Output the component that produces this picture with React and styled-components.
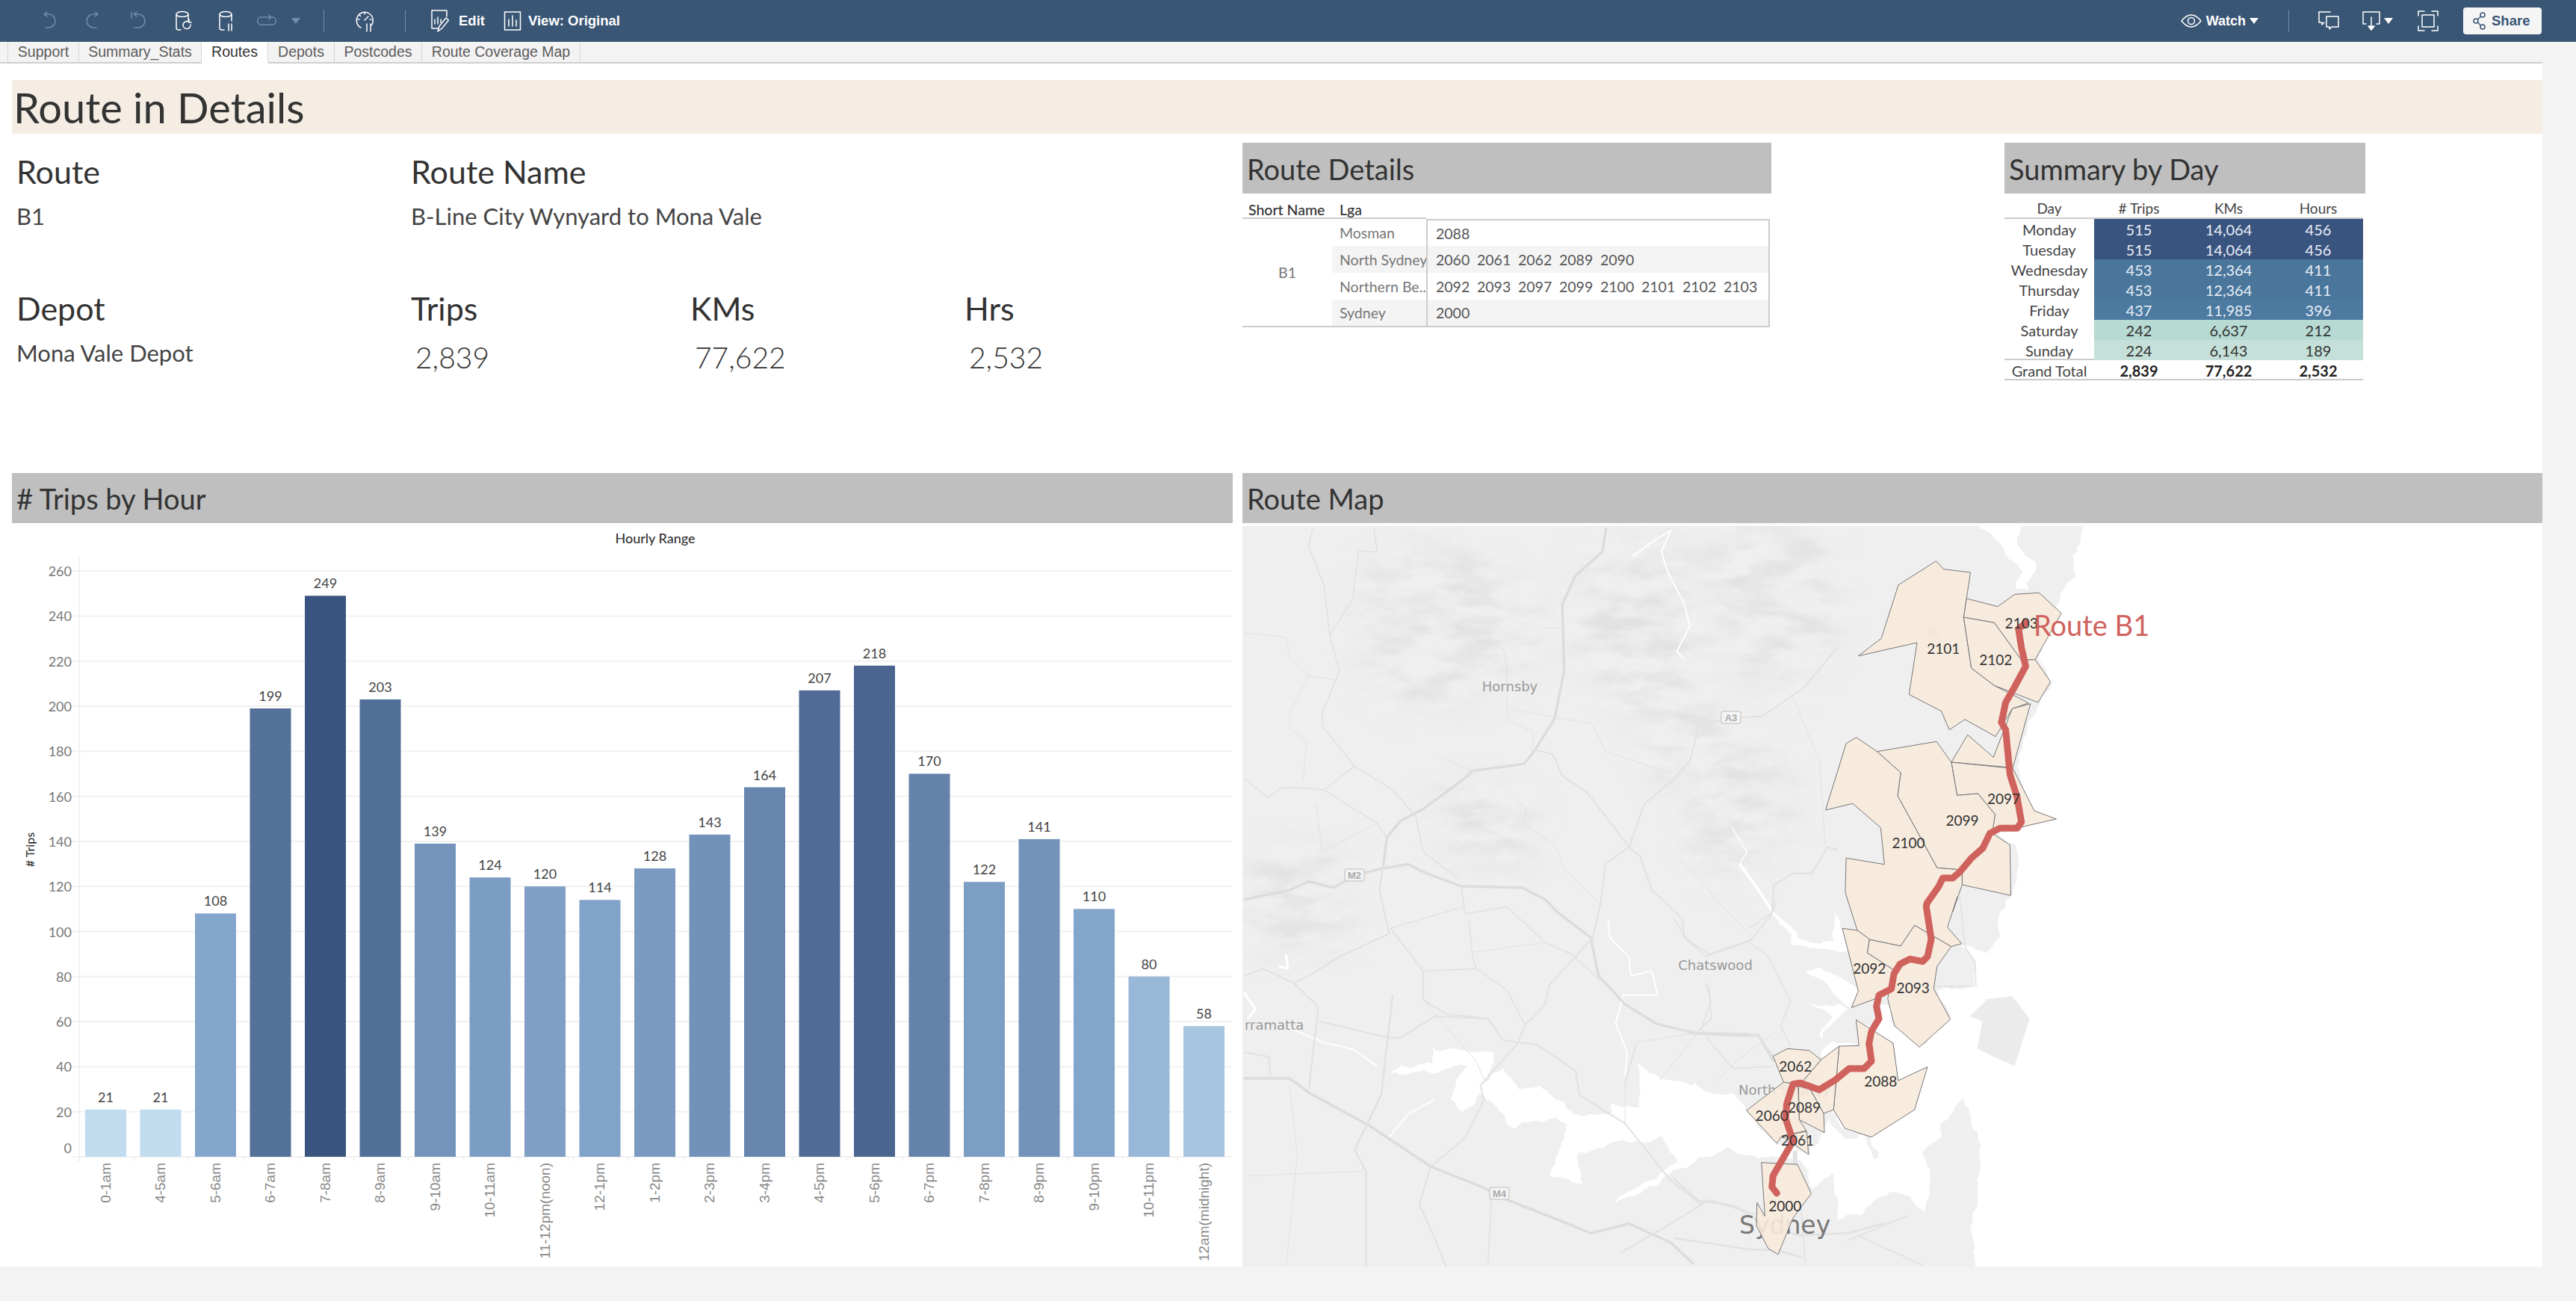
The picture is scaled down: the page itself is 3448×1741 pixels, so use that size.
import React from "react";
import styled, { createGlobalStyle } from "styled-components";

const FONT = `Lato, "Noto Sans", sans-serif`;
const UI_FONT = `"Liberation Sans", Arial, sans-serif`;

const GlobalStyle = createGlobalStyle`
  html, body { margin: 0; padding: 0; background: #f3f3f3; }
  body { font-family: ${FONT}; color: #333; }
`;

const Page = styled.div`
  width: 3448px;
  height: 1741px;
  overflow: hidden;
  background: #f3f3f3;
`;

const Toolbar = styled.div`
  height: 56px;
  background: #3a5675;
  display: flex;
  align-items: center;
  justify-content: space-between;
  padding: 0 46px 0 37px;
  font-family: ${UI_FONT};
  color: #fff;
`;

const ToolGroup = styled.div`
  display: flex;
  align-items: center;
  height: 100%;
`;

const Slot = styled.div`
  width: ${(p) => p.$w}px;
  margin-left: ${(p) => p.$ml || 0}px;
  display: flex;
  justify-content: center;
  align-items: center;
`;

const Divider = styled.div`
  width: 1px;
  height: 30px;
  background: #6d8ba8;
`;

const ToolLabel = styled.span`
  font-size: ${(p) => p.$size || 18.5}px;
  font-weight: 700;
  margin-left: ${(p) => p.$gap || 0}px;
  margin-right: ${(p) => p.$after || 0}px;
  white-space: nowrap;
`;

const ShareButton = styled.div`
  width: 105px;
  height: 36px;
  margin-left: 1px;
  background: #f5f5f5;
  border-radius: 4px;
  display: flex;
  align-items: center;
  padding-left: 13px;
  gap: 7px;
  box-sizing: border-box;
  color: #3a5675;
  font-size: 18.5px;
  font-weight: 700;
`;

const TabBar = styled.div`
  height: 29px;
  box-sizing: border-box;
  padding-left: 10px;
  display: flex;
  border-bottom: 2px solid #cfcfcf;
  width: 3403px;
  font-family: ${UI_FONT};
`;

const Tab = styled.div`
  height: 29px;
  width: ${(p) => p.$w}px;
  box-sizing: border-box;
  display: flex;
  align-items: center;
  justify-content: center;
  font-size: 19.5px;
  color: ${(p) => (p.$active ? "#333" : "#5c5c5c")};
  background: ${(p) => (p.$active ? "#fff" : "#f3f3f3")};
  border-right: 1px solid #d6d6d6;
  border-left: ${(p) => (p.$first ? "1px solid #d6d6d6" : "none")};
  border-bottom: 2px solid ${(p) => (p.$active ? "#fff" : "#cfcfcf")};
`;

const Dashboard = styled.div`
  width: 3403px;
  height: 1610px;
  box-sizing: border-box;
  padding: 22px 0 0 16px;
  background: #fff;
`;

const TitleBand = styled.div`
  height: 72px;
  background: #f5ede4;
  font-size: 56px;
  line-height: 74px;
  padding-left: 2px;
  color: #333;
`;

const TopRow = styled.div`
  height: 454px;
  display: flex;
`;

const MetaGrid = styled.div`
  width: 1647px;
  box-sizing: border-box;
  padding: 32px 0 0 6px;
  display: grid;
  grid-template-columns: 528px 374px 367px 1fr;
  grid-template-rows: 38px 145px 38px 1fr;
`;

const MetaLabel = styled.div`
  font-size: 43px;
  line-height: 38px;
  color: #333;
  grid-column: ${(p) => p.$span || "auto"};
`;

const MetaValue = styled.div`
  font-size: 31px;
  line-height: 40px;
  margin-top: 20px;
  color: #444;
  grid-column: ${(p) => p.$span || "auto"};
`;

const MetaNumber = styled.div`
  font-size: 39px;
  font-weight: 300;
  line-height: 40px;
  margin: 26px 0 0 6px;
  color: #333;
`;

const SidePanel = styled.div`
  width: ${(p) => p.$w}px;
  margin-left: ${(p) => p.$gap || 0}px;
  padding-top: 12px;
`;

const Band = styled.div`
  height: ${(p) => p.$h || 68}px;
  background: #bfbfbf;
  font-size: 38px;
  line-height: ${(p) => (p.$h || 68) + 2}px;
  padding-left: 6px;
  color: #333;
`;

const DetailsHead = styled.div`
  display: flex;
  height: 34px;
  font-size: 19.5px;
  font-weight: 500;
  line-height: 44px;
  color: #333;
`;

const HeadCell = styled.div`
  width: ${(p) => p.$w}px;
  padding-left: ${(p) => p.$pad}px;
  box-sizing: border-box;
  border-bottom: ${(p) => (p.$line ? "2px solid #ccc" : "none")};
`;

const DetailsBody = styled.div`
  display: grid;
  grid-template-columns: 120px 126px 460px;
  grid-template-rows: 36px 36px 36px 37px;
  font-size: 19.5px;
  color: #777;
`;

const ShortName = styled.div`
  grid-row: 1 / span 4;
  display: flex;
  align-items: center;
  justify-content: center;
  border-bottom: 2px solid #ccc;
`;

const LgaCell = styled.div`
  display: flex;
  align-items: center;
  padding-left: 10px;
  white-space: nowrap;
  overflow: hidden;
  background: ${(p) => (p.$alt ? "#f4f4f4" : "#fff")};
  border-bottom: ${(p) => (p.$last ? "2px solid #ccc" : "none")};
`;

const CodesCell = styled.div`
  display: flex;
  align-items: center;
  padding-left: 11px;
  color: #555;
  background: ${(p) => (p.$alt ? "#f4f4f4" : "#fff")};
  border-left: 2px solid #ccc;
  border-right: 2px solid #ccc;
  border-top: ${(p) => (p.$first ? "2px solid #ccc" : "none")};
  border-bottom: ${(p) => (p.$last ? "2px solid #ccc" : "none")};
`;

const Code = styled.span`
  width: 55px;
  flex: none;
`;

const SummaryGrid = styled.div`
  display: grid;
  grid-template-columns: 120px 120px 120px 120px;
  grid-template-rows: 34px repeat(8, 27px);
  font-size: 20px;
  text-align: center;
`;

const SummaryHead = styled.div`
  line-height: 40px;
  font-size: 19px;
  color: #444;
  border-bottom: 2px solid #ccc;
`;

const DayCell = styled.div`
  line-height: 28px;
  color: #444;
  border-bottom: ${(p) => (p.$line ? "2px solid #ccc" : "none")};
  box-sizing: border-box;
`;

const NumCell = styled.div`
  line-height: 28px;
  background: ${(p) => p.$bg};
  color: ${(p) => p.$fg};
`;

const TotalCell = styled.div`
  line-height: 28px;
  font-weight: ${(p) => (p.$label ? 400 : 700)};
  color: ${(p) => (p.$label ? "#444" : "#222")};
  border-bottom: 2px solid #ccc;
  box-sizing: border-box;
`;

const BottomRow = styled.div`
  height: 1062px;
  display: flex;
  gap: 13px;
`;

const ChartPanel = styled.div`
  width: ${(p) => p.$w}px;
  display: flex;
  flex-direction: column;
`;

const Drawing = styled.svg`
  display: block;
  flex: none;
`;

const ChartText = styled.text`
  font-family: ${FONT};
`;

const BARS = [
  ["0-1am", 21], ["4-5am", 21], ["5-6am", 108], ["6-7am", 199], ["7-8am", 249], ["8-9am", 203],
  ["9-10am", 139], ["10-11am", 124], ["11-12pm(noon)", 120], ["12-1pm", 114], ["1-2pm", 128],
  ["2-3pm", 143], ["3-4pm", 164], ["4-5pm", 207], ["5-6pm", 218], ["6-7pm", 170], ["7-8pm", 122],
  ["8-9pm", 141], ["9-10pm", 110], ["10-11pm", 80], ["12am(midnight)", 58],
];

const mix = (a, b, t) => a.map((v, i) => Math.round(v + (b[i] - v) * t));
const barColor = (v) => {
  const light = [194, 220, 239];
  const mid = [133, 166, 204];
  const dark = [57, 84, 127];
  const c = v < 108 ? mix(light, mid, (v - 21) / 87) : mix(mid, dark, (v - 108) / 141);
  return `rgb(${c.join(",")})`;
};

const TICKS = Array.from({ length: 14 }, (_, i) => i * 20);
const Y0 = 1548;
const UNIT = 3.015;

function TripsChart() {
  return (
    <Drawing width="1634" height="995" viewBox="16 700 1634 995">
      <ChartText x="877" y="727" fontSize="18" fontWeight="500" fill="#333" textAnchor="middle">
        Hourly Range
      </ChartText>
      <ChartText
        x="46"
        y="1137"
        fontSize="16"
        fontWeight="500"
        fill="#333"
        textAnchor="middle"
        transform="rotate(-90 46 1137)"
      >
        # Trips
      </ChartText>
      <line x1="106" x2="106" y1="745" y2="1554" stroke="#efefef" strokeWidth="1.5" />
      {TICKS.map((t) => (
        <g key={t}>
          <line x1="96" x2="1650" y1={Y0 - t * UNIT} y2={Y0 - t * UNIT} stroke="#f1f1f1" strokeWidth="2" />
          <ChartText x="96" y={t === 0 ? 1543 : Y0 - t * UNIT + 7} fontSize="18" fill="#777" textAnchor="end">
            {t}
          </ChartText>
        </g>
      ))}
      {BARS.map(([name, v], i) => {
        const x = 114 + i * 73.5;
        const mid = x + 27.5;
        return (
          <g key={name + i}>
            <line x1={106 + i * 73.5} x2={106 + i * 73.5} y1={Y0} y2="1554" stroke="#e8e8e8" />
            <rect x={x} y={Y0 - v * UNIT} width="55" height={v * UNIT} fill={barColor(v)} />
            <ChartText x={mid} y={Y0 - v * UNIT - 10} fontSize="18" fill="#444" textAnchor="middle">
              {v}
            </ChartText>
            <text
              x={mid + 6}
              y="1556"
              fontSize="19"
              fontFamily={UI_FONT}
              fill="#888"
              textAnchor="end"
              transform={`rotate(-90 ${mid + 6} 1556)`}
            >
              {name}
            </text>
          </g>
        );
      })}
    </Drawing>
  );
}

const z5 = (x, y) => [2300 + x / 2.613, 720 + y / 3];
const z6 = (x, y) => [2240 + x / 3, 1200 + y / 3];
const z8 = (x, y) => [1660 + x / 1.96, 700 + y / 1.568];
const pts = (fn, list) => {
  const out = [];
  for (let i = 0; i < list.length; i += 2) {
    out.push(fn(list[i], list[i + 1]).map((n) => n.toFixed(1)).join(","));
  }
  return out.join(" ");
};

const OCEAN = [
  "3520,640 2790,640",
  pts(z5, [1270, 0, 1240, 60, 1250, 160, 1200, 220, 1170, 330, 1120, 480, 1170, 580, 1120, 670, 1090, 720, 1040, 920, 1080, 1120, 1060, 1165, 970, 1190, 1045, 1240, 1045, 1400, 980, 1500]),
  pts(z6, [1300, 60, 1310, 150, 1265, 220, 1160, 195, 1210, 260, 1215, 360, 1050, 365, 1112, 492, 987, 604, 888, 518, 862, 420, 810, 440, 830, 490, 790, 520, 733, 494, 745, 598, 640, 580, 590, 640, 640, 860, 680, 930, 790, 965, 830, 1040, 800, 1040, 770, 960, 680, 980, 620, 880, 605, 947, 545, 1035, 480, 1000, 415, 990, 293, 858, 240, 800, 135, 790, 90, 735]),
  pts(z8, [1190, 1175, 1100, 1170, 1045, 1135, 1050, 1225, 975, 1220, 975, 1245, 880, 1240, 850, 1215, 790, 1180, 730, 1190, 690, 1140, 640, 1175, 670, 1118, 510, 1098, 500, 1135, 390, 1148, 390, 1152, 490, 1150, 600, 1135, 550, 1210, 590, 1240, 630, 1190, 720, 1270, 820, 1250, 860, 1270, 810, 1370, 895, 1385, 890, 1320, 1000, 1300, 1110, 1290, 1150, 1340, 1000, 1410, 985, 1430, 1130, 1365, 1280, 1310, 1358, 1333]),
  pts(z6, [340, 1050, 520, 1060, 570, 1170, 640, 1110, 660, 1290, 760, 1270, 860, 1180, 950, 1200, 1000, 1270, 1040, 1100, 1000, 1020, 1050, 980, 1160, 800, 1235, 1000, 1200, 1300, 1210, 1485, 1210, 1800]),
  "3520,1800",
].join(" ");

const WATER = [
  pts(z6, [400, 70, 500, 165, 560, 190, 640, 180, 650, 60, 670, 120, 730, 135, 735, 200, 660, 220, 560, 215, 480, 180]),
  pts(z6, [530, 300, 590, 285, 620, 310, 720, 350, 742, 378, 715, 445, 680, 420, 610, 340]),
  pts(z6, [540, 435, 680, 440, 710, 450, 640, 500, 600, 575, 590, 565, 630, 480]),
  pts(z5, [915, -60, 1060, -60, 1040, 40, 1100, 100, 1090, 210, 1050, 210, 1060, 130, 1000, 60]),
];

const RIVERS = [
  [2, [1130, 15, 1105, 60, 1120, 100, 1165, 170, 1180, 215, 1145, 270, 1165, 285]],
  [2, [1030, 70, 1080, 40, 1130, 15]],
  [1.5, [1290, 640, 1330, 690, 1310, 715]],
  [4, [1310, 715, 1360, 770, 1400, 820, 1470, 880, 1568, 895]],
  [2, [965, 830, 970, 870, 1020, 910, 1025, 950, 1080, 940, 1095, 990, 1005, 990, 985, 1050, 1015, 1110, 1010, 1160]],
  [3, [10, 985, 40, 1020, 20, 1040]],
  [3, [100, 930, 125, 935, 120, 905]],
  [2, [390, 1290, 440, 1240, 510, 1210]],
  [2, [130, 1060, 220, 1090, 300, 1105, 360, 1140]],
];

const ROADS = [
  [3.5, [960, 10, 950, 60, 880, 110, 845, 170, 850, 310, 825, 410, 770, 480, 745, 505, 610, 520, 590, 535, 480, 600, 420, 625, 385, 660, 375, 720]],
  [3.5, [10, 790, 130, 770, 180, 752, 245, 765, 300, 740, 370, 725, 440, 716, 490, 735, 580, 762, 740, 765, 800, 790, 830, 815, 920, 870, 940, 950, 1010, 1010, 1090, 1050, 1190, 1070, 1300, 1075, 1360, 1075, 1400, 1130]],
  [3.5, [10, 1165, 130, 1165, 180, 1195, 340, 1265, 500, 1350, 640, 1395, 700, 1420, 860, 1470, 920, 1490, 1020, 1470, 1130, 1510, 1190, 1555]],
  [1.5, [10, 535, 70, 575, 110, 555, 155, 555, 220, 560, 300, 510, 215, 425, 215, 400, 260, 310, 235, 235, 220, 130, 180, 50, 190, 10]],
  [1.5, [350, 10, 360, 60, 310, 60, 295, 160, 235, 235]],
  [1.5, [220, 560, 360, 630, 385, 660]],
  [1.5, [300, 510, 400, 560, 460, 615, 480, 690, 570, 745]],
  [2, [770, 475, 820, 485, 845, 530, 910, 565, 1020, 680, 1060, 590, 1140, 535, 1180, 500, 1205, 420, 1290, 410, 1370, 405, 1480, 345, 1568, 260]],
  [2, [1020, 680, 958, 715, 945, 800, 925, 870]],
  [2, [1020, 680, 1050, 700, 1080, 770, 1160, 830, 1165, 870, 1230, 905, 1340, 875, 1395, 820, 1400, 760, 1450, 735, 1500, 735, 1540, 680, 1568, 685]],
  [2, [925, 870, 810, 970, 800, 1010, 745, 1055, 730, 1090, 630, 1180, 640, 1210, 590, 1290, 500, 1350]],
  [2.5, [400, 990, 370, 1200, 300, 1315, 330, 1360, 330, 1560]],
  [1.5, [580, 762, 590, 820, 700, 805, 800, 880, 870, 905, 945, 960]],
  [1.5, [395, 850, 585, 805]],
  [2, [395, 850, 480, 940, 480, 1000, 540, 1030, 650, 1040, 690, 1085, 780, 1095, 880, 1150, 890, 1200, 1010, 1260, 1130, 1380, 1210, 1430]],
  [2, [390, 860, 365, 770, 375, 720]],
  [2, [395, 860, 260, 910, 180, 950, 140, 965, 60, 935, 10, 950]],
  [2, [140, 965, 205, 1015, 180, 1190]],
  [2, [205, 1045, 390, 1080, 420, 1080, 510, 1035, 650, 1040]],
  [2, [10, 1110, 75, 1120, 80, 1165]],
  [1.5, [600, 830, 610, 910, 620, 935, 700, 980, 745, 1050]],
  [1, [615, 900, 800, 880]],
  [1.5, [480, 940, 620, 935]],
  [1.5, [1230, 970, 1235, 1040, 1190, 1075]],
  [1, [1010, 1180, 1040, 1090, 1190, 1070]],
  [2, [1000, 1530, 1130, 1470, 1230, 1420, 1350, 1450]],
  [2, [470, 1430, 510, 1500, 540, 1560]],
  [2, [470, 1430, 500, 1350]],
  [1.5, [660, 1400, 650, 1560]],
  [1, [700, 390, 920, 420, 960, 480, 1130, 525]],
  [1, [690, 260, 700, 300, 700, 410, 770, 440, 765, 480]],
  [1, [790, 220, 840, 220]],
  [1, [520, 490, 610, 520]],
  [1, [10, 230, 120, 240, 130, 280, 180, 320, 130, 400, 130, 430, 175, 460, 165, 540]],
  [1, [175, 320, 260, 330]],
  [1, [1150, 700, 1250, 790, 1345, 870]],
  [1, [1100, 1170, 1200, 1070]],
  [1, [20, 1370, 320, 1360]],
  [1, [130, 1180, 150, 1330, 120, 1560]],
  [1, [1450, 365, 1520, 500, 1535, 680]],
  [1, [1010, 1260, 1010, 1170, 1040, 1090]],
  [1, [700, 560, 750, 600, 745, 630, 830, 680, 850, 725, 945, 800]],
  [1, [480, 1000, 620, 1130, 640, 1170]],
  [1, [200, 590, 215, 690, 360, 630]],
  [1, [1240, 1180, 1300, 1130, 1400, 1070]],
];

const CITY_ROADS = [
  [2.5, [0, 530, 100, 545, 300, 550, 340, 560, 400, 640]],
  [1.5, [300, 130, 400, 60, 410, 10]],
  [1.5, [0, 85, 60, 180, 130, 240, 300, 180, 380, 240, 470, 420, 430, 520, 470, 600]],
  [1.5, [130, 345, 150, 420, 110, 530, 160, 600, 240, 690, 400, 680]],
  [2.5, [0, 1130, 100, 1220, 240, 1240, 340, 1300, 500, 1360, 700, 1350, 850, 1310]],
  [2.5, [0, 1370, 300, 1415, 420, 1420, 520, 1450]],
  [6, [488, 1020, 488, 1080]],
  [1.5, [510, 1230, 530, 1480]],
  [1.5, [1050, 360, 1210, 360]],
  [1.5, [1150, 0, 1170, 200, 1210, 260, 1215, 360]],
  [1.5, [700, 1380, 940, 1280]],
  [1.5, [740, 1360, 1000, 1480]],
];

const TERRAIN = [
  [350, 70, 600, 40, 800, 180, 760, 330, 520, 400, 340, 360, 300, 200],
  [900, 60, 1140, 20, 1240, 220, 1180, 360, 980, 380, 860, 240],
  [1190, 440, 1400, 450, 1460, 620, 1280, 780, 1170, 660],
  [500, 540, 760, 570, 780, 720, 560, 720],
  [1200, 20, 1540, 0, 1568, 240, 1420, 380, 1250, 280],
  [1000, 330, 1240, 350, 1300, 560, 1100, 560],
  [20, 680, 280, 680, 290, 880, 40, 900],
];

const DEPOTS = [
  pts(z5, [630, 188, 762, 92, 788, 125, 882, 138, 858, 318, 885, 522, 965, 592, 1085, 662, 1028, 685, 970, 797, 862, 728, 808, 770, 780, 695, 667, 628, 695, 420, 490, 473, 570, 403]),
  pts(z5, [868, 243, 977, 275, 1037, 226, 1122, 220, 1200, 302, 1108, 488, 1060, 490, 965, 340, 858, 318]),
  pts(z5, [858, 318, 965, 340, 1060, 490, 1108, 488, 1162, 577, 1118, 660, 965, 592, 885, 522]),
  pts(z5, [1092, 665, 1030, 922, 815, 900, 872, 790, 962, 880, 1028, 685]),
  pts(z5, [815, 900, 1030, 925, 1105, 1095, 1182, 1128, 1060, 1160, 958, 1170, 968, 1110, 908, 1026, 835, 1033]),
  pts(z5, [555, 857, 763, 817, 815, 900, 835, 1033, 908, 1026, 968, 1110, 958, 1185, 1020, 1232, 1023, 1435, 853, 1392, 852, 1332, 765, 1324, 627, 1035, 638, 942]),
  [
    pts(z5, [447, 825, 482, 800, 555, 857, 638, 942, 627, 1035, 765, 1324, 852, 1332, 853, 1392, 820, 1500]),
    pts(z6, [1140, 0, 1100, 122, 1157, 188, 1115, 200, 968, 115, 912, 198, 787, 172, 738, 135, 695, 0]),
    pts(z5, [444, 1420, 447, 1285, 581, 1310, 568, 1163, 470, 1066, 375, 1092]),
  ].join(" "),
  pts(z6, [787, 172, 912, 198, 968, 115, 1115, 200, 1058, 280, 1045, 370, 1112, 492, 987, 604, 888, 518, 860, 410, 885, 295, 778, 225]),
  pts(z6, [678, 127, 738, 135, 787, 170, 778, 225, 885, 295, 875, 370, 810, 410, 715, 445, 742, 378]),
  pts(z6, [733, 494, 882, 588, 902, 738, 1020, 683, 968, 855, 795, 965, 688, 930, 643, 855, 665, 600, 745, 598]),
  pts(z6, [520, 740, 592, 655, 665, 600, 643, 855, 603, 870, 550, 775]),
  pts(z6, [502, 760, 550, 775, 603, 870, 606, 947, 505, 895]),
  pts(z6, [400, 640, 457, 610, 545, 617, 592, 655, 520, 740, 480, 750, 442, 745]),
  pts(z6, [442, 745, 500, 752, 505, 895, 533, 940, 435, 960, 415, 990, 293, 858]),
  pts(z6, [435, 960, 535, 942, 542, 1035, 480, 990]),
  pts(z6, [353, 1067, 498, 1075, 553, 1192, 480, 1290, 420, 1436, 380, 1412, 333, 1320, 335, 1228, 367, 1283]),
];

const ROUTE = [
  pts(z5, [1075, 340, 1050, 365, 1060, 440, 1075, 515, 1035, 600, 1005, 660, 990, 740, 1005, 770, 1020, 950, 1045, 1040, 1060, 1140, 1045, 1165, 985, 1165, 950, 1185, 925, 1245, 885, 1285, 845, 1340, 820, 1365, 785, 1365, 770, 1400, 730, 1465]),
  pts(z6, [1015, 40, 1035, 170, 1020, 240, 1000, 260, 950, 250, 910, 270, 885, 310, 875, 370, 825, 395, 815, 440, 825, 490, 795, 540, 785, 590, 795, 660, 765, 690, 705, 690, 650, 735, 585, 775, 510, 748, 480, 752, 455, 830, 450, 890, 480, 980, 400, 1120, 395, 1165, 415, 1190]),
].join(" ");

const CODES = [
  [z5, 1060, 343, "2103"], [z5, 787, 445, "2101"], [z5, 970, 490, "2102"], [z5, 998, 1048, "2097"],
  [z5, 853, 1134, "2099"], [z5, 665, 1224, "2100"], [z6, 787, 288, "2092"], [z6, 962, 365, "2093"],
  [z6, 490, 680, "2062"], [z6, 832, 742, "2088"], [z6, 525, 846, "2089"], [z6, 395, 878, "2060"],
  [z6, 498, 977, "2061"], [z6, 448, 1243, "2000"],
];

const BADGES = [
  [1813, 1171, "M2"], [2317, 960, "A3"], [2587, 845, "A3"], [2007, 1597, "M4"],
];

const TOWNS = [
  [2021, 925, "Hornsby", "middle"],
  [2296, 1298, "Chatswood", "middle"],
  [1666, 1378, "rramatta", "start"],
  [2327, 1465, "North Sydney", "start"],
];

function RouteMap() {
  return (
    <Drawing width="1740" height="995" viewBox="1663 700 1740 995">
      <defs>
        <filter id="soft" x="-30%" y="-30%" width="160%" height="160%">
          <feGaussianBlur stdDeviation="22" />
        </filter>
        <filter id="hillshade" filterUnits="userSpaceOnUse" x="1663" y="700" width="1740" height="995" colorInterpolationFilters="sRGB">
          <feTurbulence type="fractalNoise" baseFrequency="0.016 0.04" numOctaves="4" seed="7" />
          <feColorMatrix values="0 0 0 0 0.8  0 0 0 0 0.8  0 0 0 0 0.8  3 0 0 0 -1.2" />
        </filter>
        <filter id="coast" filterUnits="userSpaceOnUse" x="1663" y="700" width="1740" height="995" colorInterpolationFilters="sRGB">
          <feTurbulence type="fractalNoise" baseFrequency="0.035" numOctaves="3" seed="3" result="n" />
          <feDisplacementMap in="SourceGraphic" in2="n" scale="16" xChannelSelector="R" yChannelSelector="G" />
        </filter>
        <mask id="hills" maskUnits="userSpaceOnUse" x="1663" y="700" width="1740" height="995">
          {TERRAIN.map((t, i) => (
            <polygon key={i} points={pts(z8, t)} fill="#fff" filter="url(#soft)" />
          ))}
        </mask>
      </defs>
      <rect x="1663" y="704" width="1740" height="991" fill="#efefef" />
      <g mask="url(#hills)">
        <rect x="1663" y="704" width="1740" height="991" filter="url(#hillshade)" opacity="0.35" />
      </g>
      <g filter="url(#coast)">
        <polygon points={OCEAN} fill="#fff" />
        {WATER.map((w, i) => (
          <polygon key={i} points={w} fill="#fff" />
        ))}
      </g>
      <polygon
        points={pts(z6, [1190, 480, 1260, 410, 1360, 400, 1430, 490, 1370, 680, 1280, 640, 1220, 610, 1240, 500])}
        fill="#ebebeb"
      />
      <polygon points={pts(z6, [1080, 1040, 1150, 830, 1225, 1000, 1190, 1300, 1150, 1200])} fill="#f0f0f0" />
      {RIVERS.map(([w, r], i) => (
        <polyline key={i} points={pts(z8, r)} fill="none" stroke="#fff" strokeWidth={w} strokeLinejoin="round" />
      ))}
      {ROADS.map(([w, r], i) => (
        <polyline key={i} points={pts(z8, r)} fill="none" stroke={w > 3 ? "#dcdcdc" : "#e1e1e1"} strokeWidth={w} strokeLinejoin="round" />
      ))}
      {CITY_ROADS.map(([w, r], i) => (
        <polyline key={i} points={pts(z6, r)} fill="none" stroke="#e1e1e1" strokeWidth={w} strokeLinejoin="round" />
      ))}
      {BADGES.map(([x, y, t], i) => (
        <g key={i}>
          <rect x={x - 13} y={y - 8} width="26" height="16" rx="3" fill="#f4f4f4" stroke="#cfcfcf" strokeWidth="1.5" />
          <text x={x} y={y + 5} fontSize="13" fontWeight="700" fontFamily={UI_FONT} fill="#aaa" textAnchor="middle">
            {t}
          </text>
        </g>
      ))}
      {TOWNS.map(([x, y, t, a]) => (
        <text key={t} x={x} y={y} fontSize="18" fontFamily={`"DejaVu Sans", sans-serif`} fill="#999" textAnchor={a}>
          {t}
        </text>
      ))}
      <text x="2328" y="1651" fontSize="33" fontFamily={`"DejaVu Sans", sans-serif`} fill="#777">
        Sydney
      </text>
      {DEPOTS.map((d, i) => (
        <polygon key={i} points={d} fill="#f7eadb" fillOpacity="0.9" stroke="#777" strokeWidth="1" />
      ))}
      <polyline points={ROUTE} fill="none" stroke="#cf625d" strokeWidth="9" strokeLinecap="round" strokeLinejoin="round" />
      {CODES.map(([fn, x, y, t]) => {
        const [cx, cy] = fn(x, y);
        return (
          <ChartText key={t} x={cx} y={cy + 7} fontSize="19" fill="#333" textAnchor="middle">
            {t}
          </ChartText>
        );
      })}
      <ChartText x="2722" y="851" fontSize="38" fill="#cf625d">
        Route B1
      </ChartText>
    </Drawing>
  );
}

const Ico = ({ w = 24, h = 26, color = "#fff", sw = 1.5, children }) => (
  <svg width={w} height={h} viewBox={`0 0 ${w} ${h}`} fill="none" stroke={color} strokeWidth={sw} strokeLinecap="round" strokeLinejoin="round">
    {children}
  </svg>
);

const DIM = "#6f8fab";

const Caret = ({ color = "#fff" }) => (
  <svg width="12" height="8" viewBox="0 0 12 8">
    <path d="M0 0H12L6 8Z" fill={color} />
  </svg>
);

const Cylinder = ({ children }) => (
  <Ico w={24} h={30}>
    <ellipse cx="10" cy="6" rx="8" ry="3.5" />
    <path d="M2 6V24a3 3 0 0 0 3 3h3M18 6V15" />
    {children}
  </Ico>
);

function LeftTools() {
  return (
    <ToolGroup>
      <Slot $w={58}>
        <Ico color={DIM}><path d="M6 4h5a8 8 0 0 1 0 18H7M9 1 5 4l4 3" /></Ico>
      </Slot>
      <Slot $w={57}>
        <Ico color={DIM}><path d="M18 4h-5a8 8 0 0 0 0 18h4M15 1l4 3-4 3" /></Ico>
      </Slot>
      <Slot $w={63}>
        <Ico color={DIM}><path d="M8 4h5a8 8 0 0 1 0 18H8M11 1 7 4l4 3M4 1v8" /></Ico>
      </Slot>
      <Slot $w={61}>
        <Cylinder><path d="M21 20a5 5 0 1 1-2-3.5M19 13v4h3" /></Cylinder>
      </Slot>
      <Slot $w={56}>
        <Cylinder><path d="M14 19v9M18 19v9" /></Cylinder>
      </Slot>
      <Slot $w={50}>
        <Ico w={28} h={18} color={DIM}><path d="M19 4h3a4 4 0 0 1 4 4v2a4 4 0 0 1-4 4H6a4 4 0 0 1-4-4V8a4 4 0 0 1 4-4h14M17 1l3 3-3 3" /></Ico>
      </Slot>
      <Slot $w={28}><Caret color={DIM} /></Slot>
      <Slot $w={46}><Divider /></Slot>
      <Slot $w={64}>
        <Ico w={26} h={30}>
          <path d="M8 24a11 11 0 1 1 14-3" />
          <path d="M13 14l5-5M13 4v2M4 13h2M20 13h2M6 7l1.500 1.500" />
          <path d="M16 19v10M21 19v10" />
        </Ico>
      </Slot>
      <Slot $w={44}><Divider /></Slot>
      <Slot $w={50}>
        <Ico w={24} h={32}>
          <path d="M10 26H1V2h20v8" />
          <path d="M5 14v6M9 11v9M13 14v4" />
          <path d="M9 30l2-7 9-11 3.500 3-9 11z" />
        </Ico>
      </Slot>
      <ToolLabel $after={25}>Edit</ToolLabel>
      <Ico w={24} h={28}>
        <rect x="1.500" y="2" width="21" height="24" />
        <path d="M7 12v9M12 7v14M17 13v8" />
      </Ico>
      <ToolLabel $gap={9}>View: Original</ToolLabel>
    </ToolGroup>
  );
}

function RightTools() {
  return (
    <ToolGroup>
      <Ico w={28} h={18}>
        <path d="M1 9c4-5 8-8 13-8s9 3 13 8c-4 5-8 8-13 8S5 14 1 9z" />
        <circle cx="14" cy="9" r="4.500" />
      </Ico>
      <ToolLabel $gap={6} $size={18}>Watch</ToolLabel>
      <Slot $w={22}><Caret /></Slot>
      <Slot $w={70}><Divider /></Slot>
      <Slot $w={38}>
        <Ico w={28} h={26}>
          <path d="M16 1H1v14h4v3l3-3" />
          <path d="M11 7h16v14h-9l-3 3v-3h-4z" />
        </Ico>
      </Slot>
      <Slot $w={32} $ml={22}>
        <Ico w={24} h={26}>
          <path d="M5 17H1V1h22v16h-4M12 8v14" />
          <path d="M8 20h8l-4 5z" fill="#fff" />
        </Ico>
      </Slot>
      <Slot $w={14}><Caret /></Slot>
      <Slot $w={92}>
        <Ico w={28} h={28}>
          <path d="M1 7V1h8M19 1h8v6M27 21v6h-8M9 27H1v-6" />
          <rect x="6" y="6" width="16" height="16" />
        </Ico>
      </Slot>
      <ShareButton>
        <Ico w={18} h={24} color="#3a5675">
          <circle cx="13" cy="4" r="3" />
          <circle cx="4" cy="12" r="3" />
          <circle cx="13" cy="20" r="3" />
          <path d="M10.500 6 6.500 10M6.500 14l4 4" />
        </Ico>
        Share
      </ShareButton>
    </ToolGroup>
  );
}

const TABS = [
  ["Support", 96], ["Summary_Stats", 164], ["Routes", 89], ["Depots", 89], ["Postcodes", 117], ["Route Coverage Map", 212],
];

const LGAS = [
  ["Mosman", ["2088"]],
  ["North Sydney", ["2060", "2061", "2062", "2089", "2090"]],
  ["Northern Be..", ["2092", "2093", "2097", "2099", "2100", "2101", "2102", "2103"]],
  ["Sydney", ["2000"]],
];

const DAYS = [
  ["Monday", "515", "14,064", "456", "#3a5480", "#e8eef5"],
  ["Tuesday", "515", "14,064", "456", "#3a5480", "#e8eef5"],
  ["Wednesday", "453", "12,364", "411", "#4a769c", "#e8eef5"],
  ["Thursday", "453", "12,364", "411", "#4a769c", "#e8eef5"],
  ["Friday", "437", "11,985", "396", "#4c7aa1", "#e8eef5"],
  ["Saturday", "242", "6,637", "212", "#b7dad3", "#333"],
  ["Sunday", "224", "6,143", "189", "#c5e0d8", "#333"],
];

export default function App() {
  return (
    <Page>
      <GlobalStyle />
      <Toolbar>
        <LeftTools />
        <RightTools />
      </Toolbar>
      <TabBar>
        {TABS.map(([name, w], i) => (
          <Tab key={name} $w={w} $active={name === "Routes"} $first={i === 0}>
            {name}
          </Tab>
        ))}
      </TabBar>
      <Dashboard>
        <TitleBand>Route in Details</TitleBand>
        <TopRow>
          <MetaGrid>
            <MetaLabel>Route</MetaLabel>
            <MetaLabel $span="2 / span 3">Route Name</MetaLabel>
            <MetaValue>B1</MetaValue>
            <MetaValue $span="2 / span 3">B-Line City Wynyard to Mona Vale</MetaValue>
            <MetaLabel>Depot</MetaLabel>
            <MetaLabel>Trips</MetaLabel>
            <MetaLabel>KMs</MetaLabel>
            <MetaLabel>Hrs</MetaLabel>
            <MetaValue>Mona Vale Depot</MetaValue>
            <MetaNumber>2,839</MetaNumber>
            <MetaNumber>77,622</MetaNumber>
            <MetaNumber>2,532</MetaNumber>
          </MetaGrid>
          <SidePanel $w={708}>
            <Band>Route Details</Band>
            <DetailsHead>
              <HeadCell $w={120} $pad={8} $line>Short Name</HeadCell>
              <HeadCell $w={126} $pad={10} $line>Lga</HeadCell>
            </DetailsHead>
            <DetailsBody>
              <ShortName>B1</ShortName>
              {LGAS.map(([lga, codes], i) => (
                <React.Fragment key={lga}>
                  <LgaCell $alt={i % 2 === 1} $last={i === 3}>{lga}</LgaCell>
                  <CodesCell $alt={i % 2 === 1} $first={i === 0} $last={i === 3}>
                    {codes.map((c) => (
                      <Code key={c}>{c}</Code>
                    ))}
                  </CodesCell>
                </React.Fragment>
              ))}
            </DetailsBody>
          </SidePanel>
          <SidePanel $w={483} $gap={312}>
            <Band>Summary by Day</Band>
            <SummaryGrid>
              <SummaryHead>Day</SummaryHead>
              <SummaryHead># Trips</SummaryHead>
              <SummaryHead>KMs</SummaryHead>
              <SummaryHead>Hours</SummaryHead>
              {DAYS.map(([day, a, b, c, bg, fg]) => (
                <React.Fragment key={day}>
                  <DayCell $line={day === "Sunday"}>{day}</DayCell>
                  <NumCell $bg={bg} $fg={fg}>{a}</NumCell>
                  <NumCell $bg={bg} $fg={fg}>{b}</NumCell>
                  <NumCell $bg={bg} $fg={fg}>{c}</NumCell>
                </React.Fragment>
              ))}
              <TotalCell $label>Grand Total</TotalCell>
              <TotalCell>2,839</TotalCell>
              <TotalCell>77,622</TotalCell>
              <TotalCell>2,532</TotalCell>
            </SummaryGrid>
          </SidePanel>
        </TopRow>
        <BottomRow>
          <ChartPanel $w={1634}>
            <Band $h={67}># Trips by Hour</Band>
            <TripsChart />
          </ChartPanel>
          <ChartPanel $w={1740}>
            <Band $h={67}>Route Map</Band>
            <RouteMap />
          </ChartPanel>
        </BottomRow>
      </Dashboard>
    </Page>
  );
}
